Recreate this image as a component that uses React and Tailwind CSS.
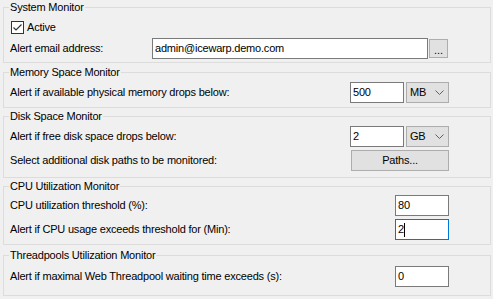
import React from 'react';

const font = { fontFamily: '"Liberation Sans", Arial, sans-serif' };

function Group({ title, className, children }) {
  return (
    <fieldset className={`mx-[3px] w-[488px] border border-[#dcdcdc] px-0 ${className}`}>
      <legend className="ml-[5px] px-[1px] h-[14px] leading-[14px]">{title}</legend>
      {children}
    </fieldset>
  );
}

function TextBox({ value, width, focused }) {
  return (
    <div
      className={`h-[21px] ${width} bg-white border flex items-center pl-[2px] ${
        focused ? 'border-[#0078d7]' : 'border-[#7a7a7a]'
      }`}
    >
      <span>{value}</span>
      {focused && <span className="w-px h-[14px] bg-black" />}
    </div>
  );
}

function Combo({ value }) {
  return (
    <div className="h-[21px] w-[43px] ml-[2px] bg-[#e1e1e1] border border-[#adadad] flex items-center pl-[3px]">
      <span>{value}</span>
      <svg className="ml-auto mr-[4px]" width="9" height="5" viewBox="0 0 9 5">
        <polyline points="0.5,0.5 4.5,4.5 8.5,0.5" fill="none" stroke="#606060" strokeWidth="1" />
      </svg>
    </div>
  );
}

function Row({ label, className, children }) {
  return (
    <div className={`flex items-center pl-[6px] pr-[41px] ${className}`}>
      <span>{label}</span>
      <div className="ml-auto flex items-center">{children}</div>
    </div>
  );
}

export default function App() {
  return (
    <div
      className="w-[493px] h-[299px] bg-[#f0f0f0] text-black text-[11px] tracking-[-0.2px] overflow-hidden"
      style={font}
    >
      <Group title="System Monitor" className="h-[63px]">
        <div className="flex items-center pl-[7px] mt-[7px] h-[13px]">
          <svg width="13" height="13" viewBox="0 0 13 13">
            <rect x="0.5" y="0.5" width="12" height="12" fill="#fff" stroke="#333" />
            <polyline points="2.5,6.5 5,9 10.5,3.5" fill="none" stroke="#333" strokeWidth="1.2" />
          </svg>
          <span className="ml-[3px]">Active</span>
        </div>
        <div className="flex items-center pl-[6px] pr-[42px] mt-[4px]">
          <span>Alert email address:</span>
          <div className="ml-auto flex items-center">
            <TextBox value="admin@icewarp.demo.com" width="w-[276px]" />
            <div className="ml-[1px] w-[19px] h-[19px] bg-[#e1e1e1] border border-[#adadad] flex items-end justify-center leading-[14px] tracking-normal">
              ...
            </div>
          </div>
        </div>
      </Group>

      <Group title="Memory Space Monitor" className="h-[43px] mt-[2px]">
        <Row label="Alert if available physical memory drops below:" className="mt-[3px]">
          <TextBox value="500" width="w-[54px]" />
          <Combo value="MB" />
        </Row>
      </Group>

      <Group title="Disk Space Monitor" className="h-[69px] mt-[1px]">
        <Row label="Alert if free disk space drops below:" className="mt-[3px]">
          <TextBox value="2" width="w-[54px]" />
          <Combo value="GB" />
        </Row>
        <Row label="Select additional disk paths to be monitored:" className="mt-[3px]">
          <div className="h-[21px] w-[98px] bg-[#e1e1e1] border border-[#adadad] flex items-center justify-center">
            Paths...
          </div>
        </Row>
      </Group>

      <Group title="CPU Utilization Monitor" className="h-[66px] mt-[1px]">
        <Row label="CPU utilization threshold (%):" className="mt-[2px]">
          <TextBox value="80" width="w-[54px]" />
        </Row>
        <Row label="Alert if CPU usage exceeds threshold for (Min):" className="mt-[3px]">
          <TextBox value="2" width="w-[54px]" focused />
        </Row>
      </Group>

      <Group title="Threadpools Utilization Monitor" className="h-[48px] mt-[3px]">
        <Row label="Alert if maximal Web Threadpool waiting time exceeds (s):" className="mt-[4px]">
          <TextBox value="0" width="w-[54px]" />
        </Row>
      </Group>
    </div>
  );
}
